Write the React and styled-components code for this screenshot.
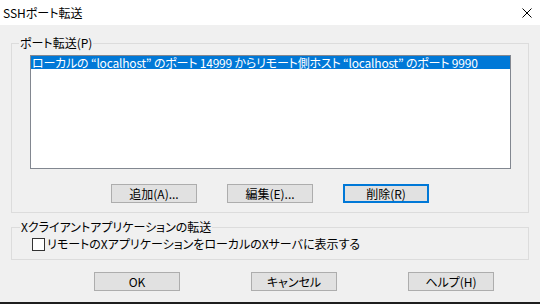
import React from "react";
import styled, { createGlobalStyle } from "styled-components";

const Global = createGlobalStyle`
  html, body { margin: 0; padding: 0; background: #f0f0f0; }
  body { font-family: "Noto Sans CJK JP", "Noto Sans", sans-serif; font-size: 12px; }
  * { box-sizing: border-box; }
`;

const Window = styled.div`
  width: 540px;
  height: 304px;
  display: flex;
  flex-direction: column;
  background: #f0f0f0;
  border-bottom: 2px solid #1e1e1e;
  font-feature-settings: "palt";
  color: #000;
`;

const TitleBar = styled.div`
  height: 25px;
  background: #fff;
  display: flex;
  align-items: center;
  justify-content: space-between;
  padding: 0 8px 0 3px;
`;

const Title = styled.span`
  font-size: 12px;
  line-height: 14px;
`;

const Content = styled.div`
  flex: 1;
  display: flex;
  flex-direction: column;
  padding: 18px 11px 0 11px;
`;

const Group = styled.div`
  position: relative;
  border: 1px solid #dcdcdc;
  height: ${(p) => p.$h}px;
  margin-top: ${(p) => p.$mt || 0}px;
  padding: ${(p) => p.$pad};
`;

const Legend = styled.span`
  position: absolute;
  top: -8px;
  left: ${(p) => p.$left}px;
  background: #f0f0f0;
  padding: 0 1px;
  line-height: 14px;
  white-space: nowrap;
`;

const ListBox = styled.div`
  width: 481px;
  height: 114px;
  border: 1px solid #828790;
  background: #fff;
  padding: 0;
`;

const ListItem = styled.div`
  height: 13px;
  line-height: 13px;
  background: ${(p) => (p.$selected ? "#0078d7" : "transparent")};
  color: ${(p) => (p.$selected ? "#fff" : "#000")};
  padding-left: 1px;
  white-space: nowrap;
  letter-spacing: -0.2px;
`;

const ButtonRow = styled.div`
  display: flex;
  gap: ${(p) => p.$gap}px;
  padding-left: ${(p) => p.$pl}px;
  margin-top: ${(p) => p.$mt}px;
`;

const Button = styled.div`
  width: 86px;
  height: 19px;
  background: #e1e1e1;
  border: ${(p) => (p.$default ? "2px solid #0078d7" : "1px solid #adadad")};
  display: flex;
  align-items: center;
  justify-content: center;
  line-height: 14px;
  white-space: nowrap;
`;

const CheckRow = styled.div`
  display: flex;
  align-items: center;
  gap: 2px;
  line-height: 14px;
`;

const CheckBox = styled.span`
  width: 13px;
  height: 13px;
  border: 1px solid #333;
  background: #fff;
  flex: none;
`;

export default function App() {
  return (
    <>
      <Global />
      <Window>
        <TitleBar>
          <Title>SSHポート転送</Title>
          <svg width="10" height="10" viewBox="0 0 10 10">
            <path d="M0.5 0.5 L9.5 9.5 M9.5 0.5 L0.5 9.5" stroke="#000" strokeWidth="1" />
          </svg>
        </TitleBar>
        <Content>
          <Group $h={170} $pad="11px 0 0 18px">
            <Legend $left={7}>ポート転送(P)</Legend>
            <ListBox>
              <ListItem $selected>
                ローカルの “localhost” のポート 14999 からリモート側ホスト “localhost” のポート 9990
              </ListItem>
            </ListBox>
            <ButtonRow $pl={81} $gap={30} $mt={15}>
              <Button>追加(A)...</Button>
              <Button>編集(E)...</Button>
              <Button $default>削除(R)</Button>
            </ButtonRow>
          </Group>
          <Group $h={33} $mt={14} $pad="9px 0 0 20px">
            <Legend $left={8}>Xクライアントアプリケーションの転送</Legend>
            <CheckRow>
              <CheckBox />
              <span>リモートのXアプリケーションをローカルのXサーバに表示する</span>
            </CheckRow>
          </Group>
          <ButtonRow $pl={83} $gap={71} $mt={12}>
            <Button>OK</Button>
            <Button>キャンセル</Button>
            <Button>ヘルプ(H)</Button>
          </ButtonRow>
        </Content>
      </Window>
    </>
  );
}
